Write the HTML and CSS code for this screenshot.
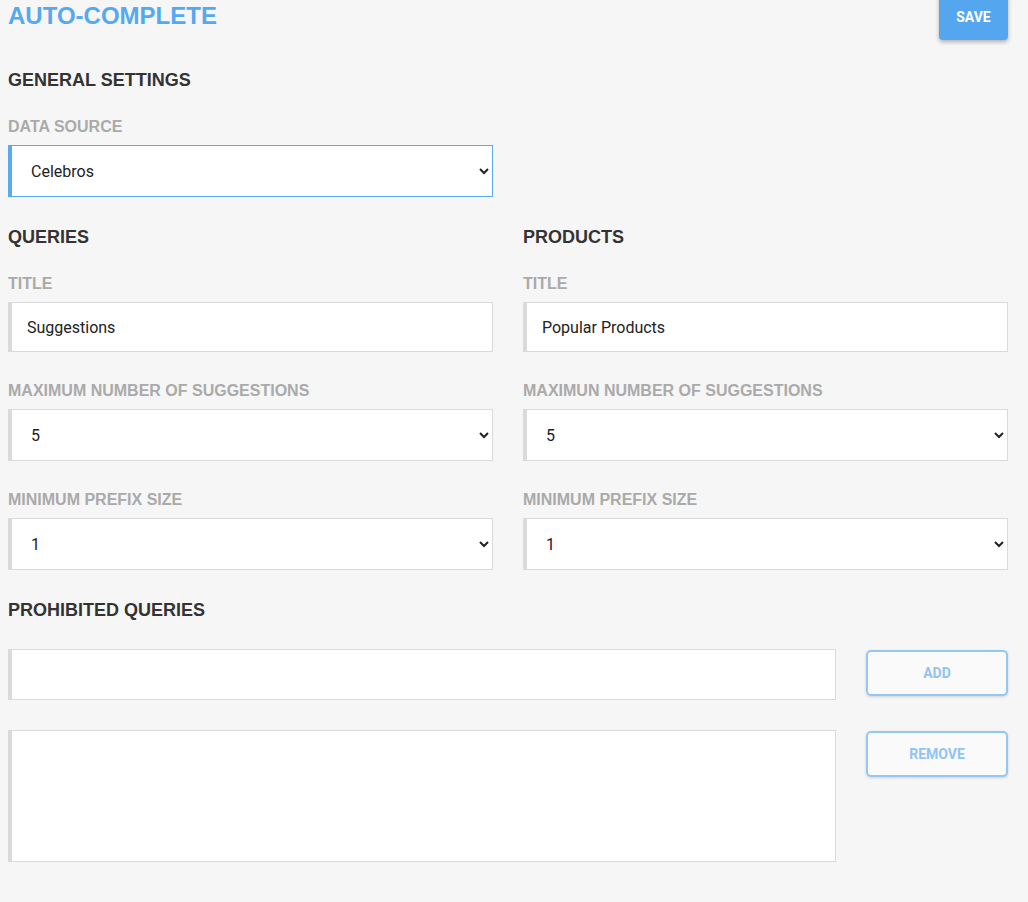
FILE: index.html
```html
<!DOCTYPE html>
<html lang="en">
<head>
    <meta charset="UTF-8">
    <title>Auto-complete</title>
    <link rel="stylesheet" href="styles.css">
</head>
<body>
    <div class="page">
        <header class="page-head">
            <h1 class="page-title">AUTO-COMPLETE</h1>
            <button class="btn-save">SAVE</button>
        </header>

        <section class="block">
            <h2 class="block-title">GENERAL SETTINGS</h2>
            <div class="field field-half">
                <label class="field-label">DATA SOURCE</label>
                <select class="control control-select is-active">
                    <option>Celebros</option>
                    <option>Default</option>
                </select>
            </div>
        </section>

        <div class="columns">
            <section class="block">
                <h2 class="block-title">QUERIES</h2>
                <div class="field">
                    <label class="field-label">TITLE</label>
                    <input class="control" type="text" value="Suggestions">
                </div>
                <div class="field">
                    <label class="field-label">MAXIMUM NUMBER OF SUGGESTIONS</label>
                    <select class="control control-select">
                        <option>5</option>
                        <option>10</option>
                    </select>
                </div>
                <div class="field">
                    <label class="field-label">MINIMUM PREFIX SIZE</label>
                    <select class="control control-select">
                        <option>1</option>
                        <option>2</option>
                    </select>
                </div>
            </section>
            <section class="block">
                <h2 class="block-title">PRODUCTS</h2>
                <div class="field">
                    <label class="field-label">TITLE</label>
                    <input class="control" type="text" value="Popular Products">
                </div>
                <div class="field">
                    <label class="field-label">MAXIMUN NUMBER OF SUGGESTIONS</label>
                    <select class="control control-select">
                        <option>5</option>
                        <option>10</option>
                    </select>
                </div>
                <div class="field">
                    <label class="field-label">MINIMUM PREFIX SIZE</label>
                    <select class="control control-select">
                        <option>1</option>
                        <option>2</option>
                    </select>
                </div>
            </section>
        </div>

        <section class="block">
            <h2 class="block-title">PROHIBITED QUERIES</h2>
            <div class="prohibited">
                <input class="control" type="text">
                <button class="btn-line">ADD</button>
                <textarea class="control control-area"></textarea>
                <button class="btn-line">REMOVE</button>
            </div>
        </section>
    </div>
</body>
</html>
```

FILE: styles.css
```css
*{
    padding:0;
    margin:0;
    box-sizing: border-box;
}
body{
    background: #f6f6f6;
    font-family: "Liberation Sans", Arial, sans-serif;
}
.page{
    width:1000px;
    margin-left:8px;
}
.page-head{
    display: flex;
    justify-content: space-between;
    align-items: flex-start;
}
.page-title{
    margin-top:2px;
    font-size:24px;
    line-height:28px;
    color:#54a9f0;
}
.btn-save{
    margin-top:-6px;
    height:46px;
    width:69px;
    border:none;
    border-radius:4px;
    background:#54a7ef;
    color:#fff;
    font-family: Roboto, sans-serif;
    font-weight:bold;
    font-size:14px;
    box-shadow: 0 2px 4px rgba(0,0,0,.3);
}
.block-title{
    margin-top:30px;
    font-size:18px;
    line-height:20px;
    color:#333;
}
.field-label{
    display: block;
    margin-top:27px;
    font-size:16px;
    line-height:20px;
    font-weight:bold;
    color:#aaa;
}
.field + .field .field-label{
    margin-top:29px;
}
.field-half{
    width:485px;
}
.control{
    display: block;
    width:100%;
    margin-top:8px;
    height:50px;
    padding:0 15px;
    background:#fff;
    border:1px solid #dadada;
    border-left:4px solid #dadada;
    border-radius:0;
    font-family: Roboto, sans-serif;
    font-size:16px;
    color:#222;
    outline: none;
}
.control-select{
    height:52px;
    padding-right:0;
}
.control.is-active{
    border-color:#5aaaf0;
}
.columns{
    display: grid;
    grid-template-columns: 1fr 1fr;
    column-gap:30px;
}
.prohibited{
    display: grid;
    grid-template-columns: 1fr 142px;
    column-gap:30px;
    row-gap:30px;
    align-items: start;
    margin-top:29px;
}
.prohibited .control{
    margin-top:0;
}
.prohibited .control:first-child{
    height:51px;
}
.control-area{
    height:132px;
    resize: none;
}
.btn-line{
    margin-top:1px;
    height:46px;
    border:2px solid #93c8f5;
    border-radius:5px;
    background:#fafafa;
    color:#90c4f2;
    font-family: Roboto, sans-serif;
    font-weight:bold;
    font-size:14px;
    box-shadow: 0 1px 3px rgba(0,0,0,.15);
}
```
